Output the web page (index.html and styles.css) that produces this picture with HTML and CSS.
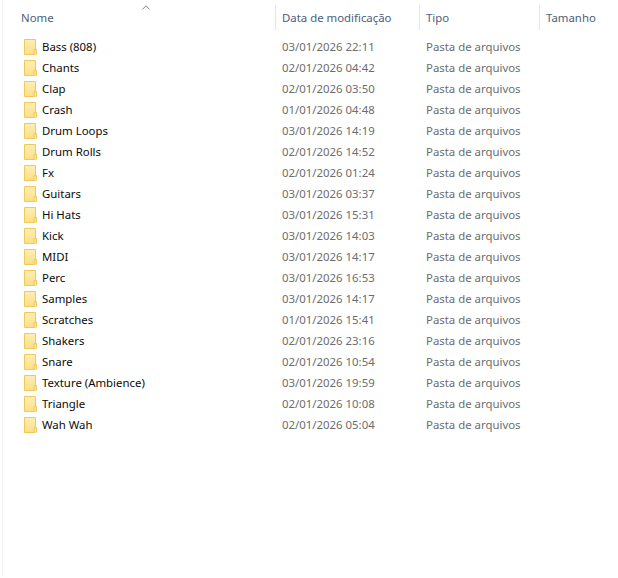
FILE: index.html
```html
<!DOCTYPE html>
<html lang="pt">
<head>
<meta charset="utf-8">
<title>Pasta</title>
<link rel="stylesheet" href="styles.css">
</head>
<body>
<svg class="defs" width="0" height="0" aria-hidden="true">
  <defs>
    <linearGradient id="fill" x1="0" y1="0" x2="0" y2="1">
      <stop offset="0" stop-color="#ffeeb4"/>
      <stop offset="1" stop-color="#fcdf86"/>
    </linearGradient>
    <symbol id="folder" viewBox="0 0 13 16">
      <path d="M.5.5h11v15H.5z" fill="url(#fill)" stroke="#f0c95c"/>
      <path d="M10 15.500V10.500h2.500v5" fill="#fbe39a" stroke="#f0c95c"/>
    </symbol>
  </defs>
</svg>
<main class="list">
  <header class="head">
    <svg class="sort" width="8" height="5" viewBox="0 0 8 5"><path d="M.3 4.500 4 .8 7.700 4.500" fill="none" stroke="#808080"/></svg>
    <div class="col col-name">Nome</div>
    <div class="col col-date">Data de modificação</div>
    <div class="col col-type">Tipo</div>
    <div class="col col-size">Tamanho</div>
  </header>
  <div class="rows">
    <div class="row"><div class="name"><svg class="ico"><use href="#folder"/></svg>Bass (808)</div><div class="date">03/01/2026 22:11</div><div class="type">Pasta de arquivos</div></div>
    <div class="row"><div class="name"><svg class="ico"><use href="#folder"/></svg>Chants</div><div class="date">02/01/2026 04:42</div><div class="type">Pasta de arquivos</div></div>
    <div class="row"><div class="name"><svg class="ico"><use href="#folder"/></svg>Clap</div><div class="date">02/01/2026 03:50</div><div class="type">Pasta de arquivos</div></div>
    <div class="row"><div class="name"><svg class="ico"><use href="#folder"/></svg>Crash</div><div class="date">01/01/2026 04:48</div><div class="type">Pasta de arquivos</div></div>
    <div class="row"><div class="name"><svg class="ico"><use href="#folder"/></svg>Drum Loops</div><div class="date">03/01/2026 14:19</div><div class="type">Pasta de arquivos</div></div>
    <div class="row"><div class="name"><svg class="ico"><use href="#folder"/></svg>Drum Rolls</div><div class="date">02/01/2026 14:52</div><div class="type">Pasta de arquivos</div></div>
    <div class="row"><div class="name"><svg class="ico"><use href="#folder"/></svg>Fx</div><div class="date">02/01/2026 01:24</div><div class="type">Pasta de arquivos</div></div>
    <div class="row"><div class="name"><svg class="ico"><use href="#folder"/></svg>Guitars</div><div class="date">03/01/2026 03:37</div><div class="type">Pasta de arquivos</div></div>
    <div class="row"><div class="name"><svg class="ico"><use href="#folder"/></svg>Hi Hats</div><div class="date">03/01/2026 15:31</div><div class="type">Pasta de arquivos</div></div>
    <div class="row"><div class="name"><svg class="ico"><use href="#folder"/></svg>Kick</div><div class="date">03/01/2026 14:03</div><div class="type">Pasta de arquivos</div></div>
    <div class="row"><div class="name"><svg class="ico"><use href="#folder"/></svg>MIDI</div><div class="date">03/01/2026 14:17</div><div class="type">Pasta de arquivos</div></div>
    <div class="row"><div class="name"><svg class="ico"><use href="#folder"/></svg>Perc</div><div class="date">03/01/2026 16:53</div><div class="type">Pasta de arquivos</div></div>
    <div class="row"><div class="name"><svg class="ico"><use href="#folder"/></svg>Samples</div><div class="date">03/01/2026 14:17</div><div class="type">Pasta de arquivos</div></div>
    <div class="row"><div class="name"><svg class="ico"><use href="#folder"/></svg>Scratches</div><div class="date">01/01/2026 15:41</div><div class="type">Pasta de arquivos</div></div>
    <div class="row"><div class="name"><svg class="ico"><use href="#folder"/></svg>Shakers</div><div class="date">02/01/2026 23:16</div><div class="type">Pasta de arquivos</div></div>
    <div class="row"><div class="name"><svg class="ico"><use href="#folder"/></svg>Snare</div><div class="date">02/01/2026 10:54</div><div class="type">Pasta de arquivos</div></div>
    <div class="row"><div class="name"><svg class="ico"><use href="#folder"/></svg>Texture (Ambience)</div><div class="date">03/01/2026 19:59</div><div class="type">Pasta de arquivos</div></div>
    <div class="row"><div class="name"><svg class="ico"><use href="#folder"/></svg>Triangle</div><div class="date">02/01/2026 10:08</div><div class="type">Pasta de arquivos</div></div>
    <div class="row"><div class="name"><svg class="ico"><use href="#folder"/></svg>Wah Wah</div><div class="date">02/01/2026 05:04</div><div class="type">Pasta de arquivos</div></div>
  </div>
</main>
</body>
</html>
```
FILE: styles.css
```css
* { box-sizing: border-box; }
html, body { margin: 0; height: 100%; background: #fff; overflow: hidden; }
body { padding-left: 2px; font-family: "Noto Sans", "Open Sans", sans-serif; font-size: 11.4px; }
.defs { position: absolute; }
.list { height: 577px; border-left: 1px solid #f3f3f3; }
.head, .row { display: grid; grid-template-columns: 272px 144px 120px 1fr; }
.head { position: relative; height: 36px; padding-top: 5px; color: #4c607a; }
.sort { position: absolute; left: 139px; top: 5px; }
.col { height: 25px; line-height: 26px; padding-left: 6px; border-left: 1px solid #e5e5e5; }
.col-name { padding-left: 18px; border-left: 0; }
.rows { display: flex; flex-direction: column; }
.row { height: 21px; line-height: 21px; color: #6d6d6d; }
.date, .type { padding-left: 7px; }
.name { display: flex; align-items: center; gap: 5px; padding-left: 21px; color: #0a0a0a; }
.ico { width: 13px; height: 16px; flex: none; }
```
